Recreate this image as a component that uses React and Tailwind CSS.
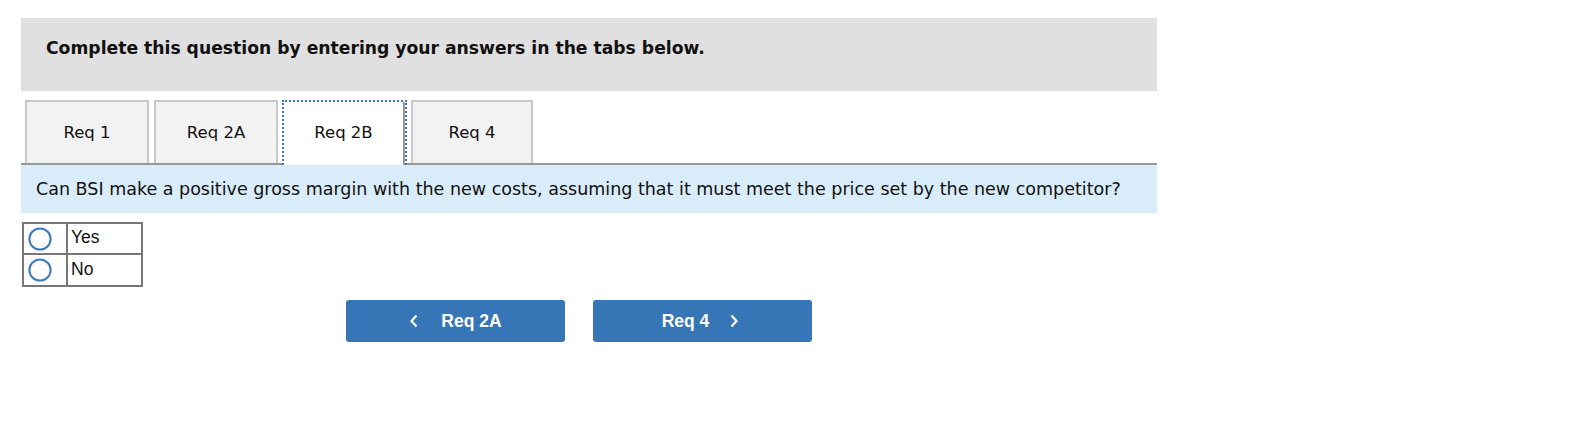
import React from "react";

const verdana = { fontFamily: '"DejaVu Sans", Verdana, sans-serif' };
const arial = { fontFamily: '"Liberation Sans", Arial, sans-serif' };

function Tab({ label, w = "w-[124px]" }) {
  return (
    <div className={`${w} h-[63px] border-2 border-b-0 border-[#c8c8c8] bg-[#f2f2f2] flex items-center justify-center text-[16.5px] text-[#111] pt-[1px]`}>
      {label}
    </div>
  );
}

function Radio() {
  return (
    <svg width="24" height="24" viewBox="0 0 24 24">
      <circle cx="12" cy="12" r="10.6" fill="white" stroke="#3a78c0" strokeWidth="2" />
    </svg>
  );
}

export default function App() {
  return (
    <div className="w-[1592px] h-[422px] bg-white" style={verdana}>
      <div className="pt-[18px] pl-[21px]">
        <div className="w-[1136px]">
          <div className="h-[73px] bg-[#e0e0e0] flex items-center pl-[25px] pb-[11px]">
            <span className="font-bold text-[17.2px] text-[#111]">
              Complete this question by entering your answers in the tabs below.
            </span>
          </div>
          <div className="mt-[9px] flex items-end pl-[4px] border-b-2 border-[#999] h-[65px]">
            <Tab label="Req 1" />
            <div className="w-[5px]" />
            <Tab label="Req 2A" />
            <div className="w-[4px]" />
            <div className="relative -mb-[2px] w-[125px] h-[65px] bg-white border-2 border-b-0 border-dotted border-[#3a78c0]">
              <div className="h-full border-r-2 border-[#999] flex items-center justify-center text-[16.5px] text-[#111] pb-[1px]">
                Req 2B
              </div>
            </div>
            <div className="w-[4px]" />
            <Tab label="Req 4" w="w-[122px]" />
          </div>
          <div className="h-[48px] bg-[#d9ecf9] flex items-center pl-[15px] text-[17.5px] text-[#111]">
            Can BSI make a positive gross margin with the new costs, assuming that it must meet the price set by the new competitor?
          </div>
          <div
            className="mt-[9px] ml-[1px] w-[121px] border-2 border-[#777] text-[17.5px] text-[#111]"
            style={arial}
          >
            <div className="flex h-[31px] border-b-2 border-[#777]">
              <div className="w-[44px] border-r-2 border-[#777] flex items-center pl-[4px]">
                <Radio />
              </div>
              <div className="pl-[3px] flex items-center pb-[2px]">Yes</div>
            </div>
            <div className="flex h-[30px]">
              <div className="w-[44px] border-r-2 border-[#777] flex items-center pl-[4px]">
                <Radio />
              </div>
              <div className="pl-[3px] flex items-center pb-[2px]">No</div>
            </div>
          </div>
          <div className="mt-[13px] ml-[325px] flex gap-[28px]" style={arial}>
            <button className="w-[219px] h-[42px] bg-[#3676b6] rounded-[3px] text-white font-bold text-[17.5px] flex items-center justify-center">
              <svg width="10" height="16" viewBox="0 0 10 16" className="mr-[22px]">
                <path d="M7.5 2.5 L2.5 8 L7.5 13.5" fill="none" stroke="white" strokeWidth="2.2" />
              </svg>
              <span>Req 2A</span>
            </button>
            <button className="w-[219px] h-[42px] bg-[#3676b6] rounded-[3px] text-white font-bold text-[17.5px] flex items-center justify-center pr-[4px]">
              <span>Req 4</span>
              <svg width="10" height="16" viewBox="0 0 10 16" className="ml-[20px]">
                <path d="M2.5 2.5 L7.5 8 L2.5 13.5" fill="none" stroke="white" strokeWidth="2.2" />
              </svg>
            </button>
          </div>
        </div>
      </div>
    </div>
  );
}
